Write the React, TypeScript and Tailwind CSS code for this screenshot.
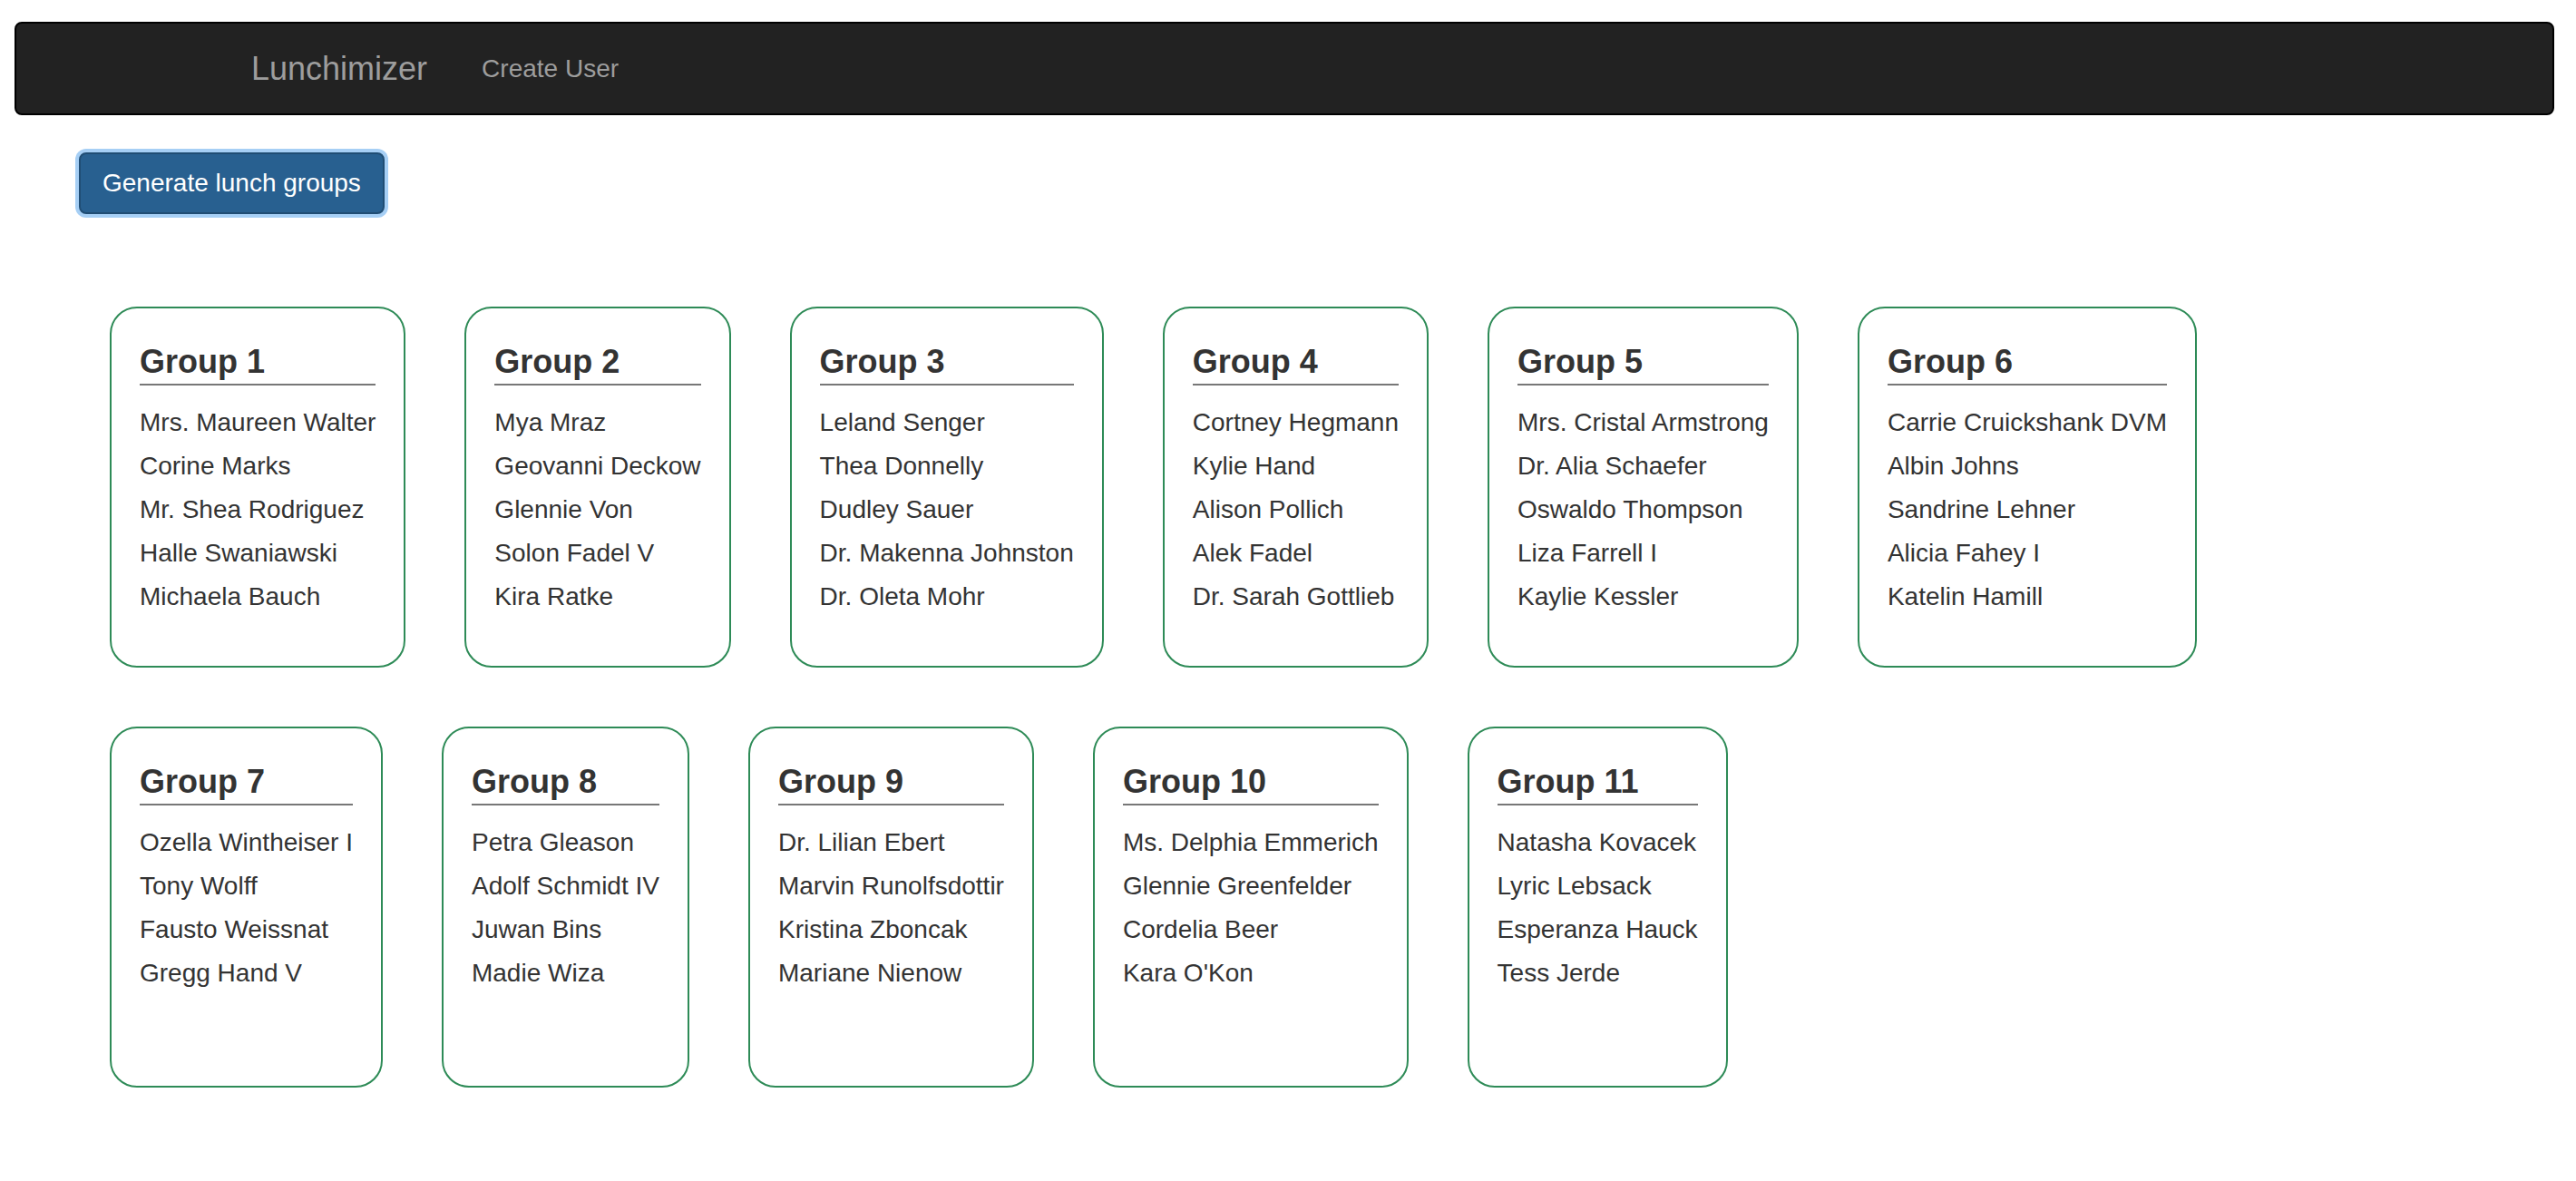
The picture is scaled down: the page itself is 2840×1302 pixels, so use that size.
import React from 'react';

const groups: string[][] = [
  ['Mrs. Maureen Walter', 'Corine Marks', 'Mr. Shea Rodriguez', 'Halle Swaniawski', 'Michaela Bauch'],
  ['Mya Mraz', 'Geovanni Deckow', 'Glennie Von', 'Solon Fadel V', 'Kira Ratke'],
  ['Leland Senger', 'Thea Donnelly', 'Dudley Sauer', 'Dr. Makenna Johnston', 'Dr. Oleta Mohr'],
  ['Cortney Hegmann', 'Kylie Hand', 'Alison Pollich', 'Alek Fadel', 'Dr. Sarah Gottlieb'],
  ['Mrs. Cristal Armstrong', 'Dr. Alia Schaefer', 'Oswaldo Thompson', 'Liza Farrell I', 'Kaylie Kessler'],
  ['Carrie Cruickshank DVM', 'Albin Johns', 'Sandrine Lehner', 'Alicia Fahey I', 'Katelin Hamill'],
  ['Ozella Wintheiser I', 'Tony Wolff', 'Fausto Weissnat', 'Gregg Hand V'],
  ['Petra Gleason', 'Adolf Schmidt IV', 'Juwan Bins', 'Madie Wiza'],
  ['Dr. Lilian Ebert', 'Marvin Runolfsdottir', 'Kristina Zboncak', 'Mariane Nienow'],
  ['Ms. Delphia Emmerich', 'Glennie Greenfelder', 'Cordelia Beer', "Kara O'Kon"],
  ['Natasha Kovacek', 'Lyric Lebsack', 'Esperanza Hauck', 'Tess Jerde'],
];

// the page shows the groups in two rows: 6 then 5
const rows = [groups.slice(0, 6), groups.slice(6)];

function GroupCard({ index, members }: { index: number; members: string[] }) {
  return (
    <div className="h-[398px] w-fit border-2 border-[#2e8b57] rounded-[30px] px-[31px] pt-[39px] flex flex-col">
      <h4 className="text-[36px] leading-[40px] font-bold text-[#333] pb-[4px] border-b-2 border-[#777]">
        Group {index}
      </h4>
      <ul className="mt-[17px]">
        {members.map((m) => (
          <li key={m} className="text-[28px] leading-[48px] text-[#333] whitespace-nowrap">
            {m}
          </li>
        ))}
      </ul>
    </div>
  );
}

export default function App() {
  let n = 0;
  return (
    <div className="bg-white min-h-screen pt-[24px] font-['Liberation_Sans',Arial,sans-serif]">
      <nav className="ml-4 mr-6 h-[103px] bg-[#222] border-2 border-black rounded-[8px] flex items-center pl-[259px]">
        <a className="text-[36px] leading-[40px] text-[#9d9d9d]">Lunchimizer</a>
        <a className="ml-[60px] text-[28px] leading-[40px] text-[#9d9d9d]">Create User</a>
      </nav>

      <div className="pl-[87px] pt-[41px]">
        <button className="bg-[#286090] border-2 border-[#204d74] text-white text-[28px] leading-[40px] px-[24px] py-[12px] rounded-[8px] ring-4 ring-[#a6cff5]">
          Generate lunch groups
        </button>

        <div className="pl-[34px] pt-[102px] flex flex-col gap-[65px]">
          {rows.map((row, ri) => (
            <div key={ri} className="flex items-start gap-[65px]">
              {row.map((members) => {
                n += 1;
                return <GroupCard key={n} index={n} members={members} />;
              })}
            </div>
          ))}
        </div>
      </div>
    </div>
  );
}
